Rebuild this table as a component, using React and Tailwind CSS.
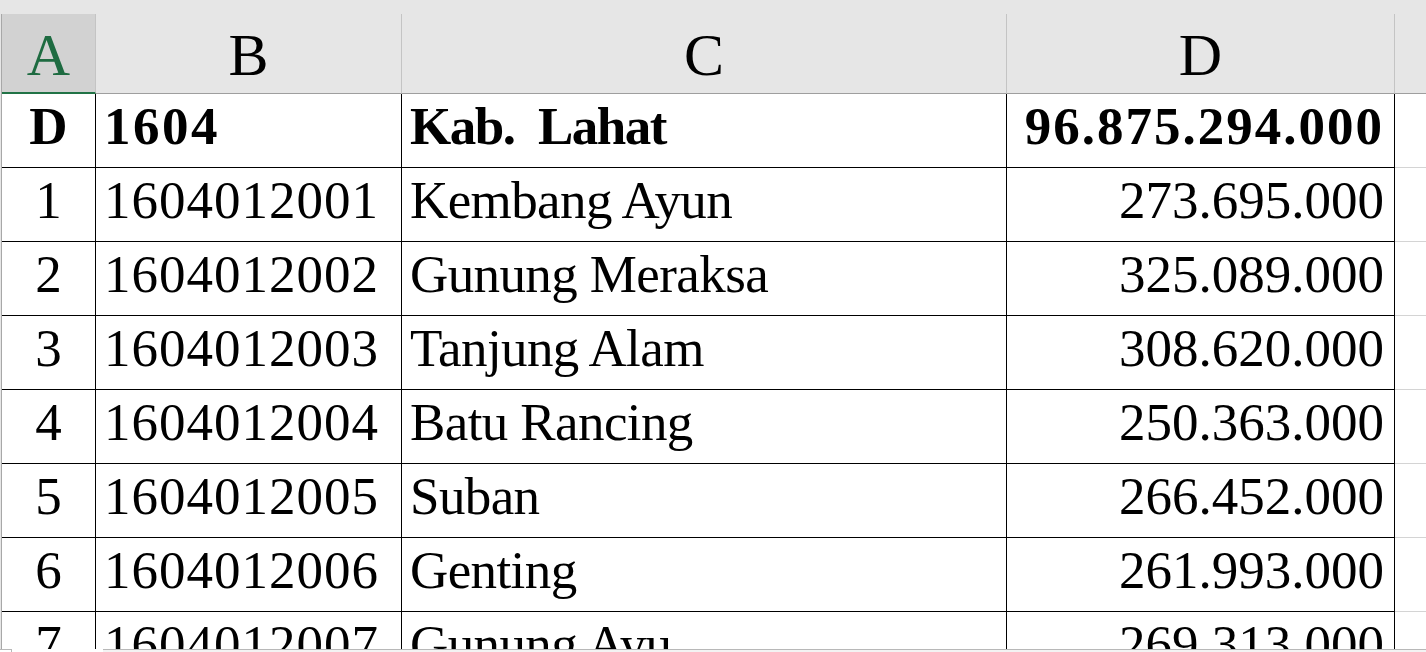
import React from 'react'

const rows = [
  ['1', '1604012001', 'Kembang Ayun', '273.695.000'],
  ['2', '1604012002', 'Gunung Meraksa', '325.089.000'],
  ['3', '1604012003', 'Tanjung Alam', '308.620.000'],
  ['4', '1604012004', 'Batu Rancing', '250.363.000'],
  ['5', '1604012005', 'Suban', '266.452.000'],
  ['6', '1604012006', 'Genting', '261.993.000'],
  ['7', '1604012007', 'Gunung Ayu', '269.313.000'],
]

const serif = "font-['Liberation_Serif','Times_New_Roman',serif]"

function HeaderCell({ label, active, className = '' }) {
  return (
    <div
      className={
        'h-[80px] flex items-center justify-center text-[60px] leading-none pt-[3px] border-r border-[#c4c4c4] ' +
        (active
          ? 'bg-[#d2d2d2] text-[#1e6b41] border-b-2 border-b-[#217346] '
          : 'bg-[#e6e6e6] text-black border-b border-b-[#9e9e9e] ') +
        className
      }
    >
      {label}
    </div>
  )
}

function Row({ cells, bold }) {
  const [no, code, name, amount] = cells
  const base = 'h-[74px] flex items-center border-b border-black text-[53px] leading-none pb-[9px] whitespace-pre '
  const weight = bold ? 'font-bold ' : ''
  return (
    <>
      <div className={base + weight + 'justify-center border-r'}>{no}</div>
      <div className={base + weight + 'pl-[8px] border-r ' + (bold ? 'tracking-[2.5px]' : 'tracking-[1px]')}>
        {code}
      </div>
      <div className={base + weight + 'pl-[8px] border-r ' + (bold ? 'tracking-[-1.5px]' : 'tracking-[-0.6px]')}>
        {name}
      </div>
      <div className={base + weight + 'justify-end pr-[10px] border-r ' + (bold ? 'tracking-[2px]' : '')}>
        {amount}
      </div>
      <div className="h-[74px] border-b border-[#d4d4d4]" />
    </>
  )
}

export default function App() {
  return (
    <div className={'w-[1426px] h-[652px] overflow-hidden flex flex-col bg-white ' + serif}>
      <div className="h-[14px] shrink-0 bg-[#e6e6e6]" />
      <div className="flex-1 overflow-hidden flex bg-[#e6e6e6]">
        <div className="w-[1px] shrink-0" />
        <div className="flex-1 border-l border-[#a8a8a8] bg-white">
          <div className="grid grid-cols-[94px_306px_605px_388px_1fr]">
            <HeaderCell label="A" active />
            <HeaderCell label="B" />
            <HeaderCell label="C" />
            <HeaderCell label="D" />
            <div className="h-[80px] bg-[#e6e6e6] border-b border-b-[#9e9e9e]" />
            <Row cells={['D', '1604', 'Kab.  Lahat', '96.875.294.000']} bold />
            {rows.map((r) => (
              <Row key={r[0]} cells={r} />
            ))}
          </div>
        </div>
      </div>
      <div className="h-[3px] shrink-0 flex">
        <div className="w-[12px] border-t border-r border-[#b8b8b8] bg-white" />
        <div className="w-[91px] bg-white" />
        <div className="flex-1 border-t border-[#b8b8b8] bg-[#f3f3f3]" />
      </div>
    </div>
  )
}
